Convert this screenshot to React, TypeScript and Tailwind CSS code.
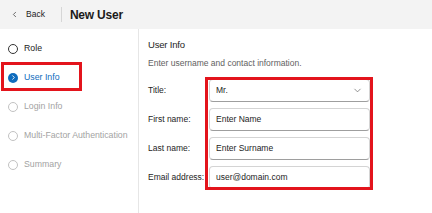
import { ChevronLeft, ChevronDown, ChevronRight } from "lucide-react"

type Step = {
  label: string
  state: "done" | "active" | "todo"
}

const steps: Step[] = [
  { label: "Role", state: "done" },
  { label: "User Info", state: "active" },
  { label: "Login Info", state: "todo" },
  { label: "Multi-Factor Authentication", state: "todo" },
  { label: "Summary", state: "todo" },
]

const StepItem = ({ step }: { step: Step }) => {
  return (
    <div className="relative flex h-[29px] items-center pl-[8px]">
      {step.state === "active" ? (
        <span className="flex h-[10px] w-[10px] items-center justify-center rounded-full bg-[#0f6cbd]">
          <ChevronRight className="h-[7px] w-[7px] text-white" strokeWidth={3} />
        </span>
      ) : (
        <span
          className={
            step.state === "done"
              ? "h-[10px] w-[10px] rounded-full border border-[#333333]"
              : "h-[10px] w-[10px] rounded-full border border-[#c2c2c2]"
          }
        />
      )}
      <span
        className={
          step.state === "active"
            ? "ml-[6px] text-[8.75px] text-[#0f6cbd]"
            : step.state === "done"
              ? "ml-[6px] text-[8.75px] text-[#242424]"
              : "ml-[6px] text-[8.75px] text-[#a3a3a3]"
        }
      >
        {step.label}
      </span>
      {step.state === "active" && (
        <div className="absolute left-[1px] top-[-1.5px] h-[29px] w-[81px] border-[3px] border-[#e3141c]" />
      )}
    </div>
  )
}

const Field = ({ value, select }: { value: string; select?: boolean }) => {
  return (
    <div className="flex h-[23px] items-center justify-between rounded-[4px] border border-[#d4d4d4] border-b-[#9e9e9e] pl-[6px] pr-[6px] text-[8.5px] text-[#242424]">
      <span>{value}</span>
      {select && (
        <ChevronDown className="h-[11px] w-[11px] text-[#616161]" strokeWidth={1.5} />
      )}
    </div>
  )
}

export default function App() {
  const labels = ["Title:", "First name:", "Last name:", "Email address:"]

  return (
    <div
      className="flex h-[213px] w-[432px] flex-col overflow-hidden bg-white text-[#242424]"
      style={{ fontFamily: '"Liberation Sans", Arial, sans-serif' }}
    >
      {/* header */}
      <div className="flex h-[29px] shrink-0 items-center bg-[#f3f3f3]">
        <div className="flex items-center pl-[10px]">
          <ChevronLeft className="h-[9px] w-[9px] text-[#424242]" strokeWidth={2} />
          <span className="ml-[7px] text-[8.5px] text-[#242424]">Back</span>
        </div>
        <div className="ml-[16px] h-[15px] w-px bg-[#d6d6d6]" />
        <h1 className="ml-[8px] text-[12px] font-bold tracking-[-0.2px] text-[#1a1a1a]">
          New User
        </h1>
      </div>

      <div className="flex flex-1">
        {/* steps */}
        <div className="w-[139px] shrink-0 border-r border-[#e6e6e6] pt-[5px]">
          {steps.map((s) => (
            <StepItem key={s.label} step={s} />
          ))}
        </div>

        {/* form */}
        <div className="flex flex-1 flex-col pl-[9px] pt-[10px]">
          <h2 className="text-[9.5px] font-medium leading-[12px] tracking-[-0.2px] text-[#242424]">
            User Info
          </h2>
          <p className="mt-[6px] text-[8.5px] leading-[12px] text-[#616161]">
            Enter username and contact information.
          </p>

          <div className="mt-[10px] flex">
            <div className="flex w-[61px] flex-col gap-[6px]">
              {labels.map((l) => (
                <div key={l} className="flex h-[23px] items-center text-[8.5px] text-[#242424]">
                  {l}
                </div>
              ))}
            </div>
            <div className="relative flex w-[161px] flex-col gap-[6px]">
              <Field value="Mr." select />
              <Field value="Enter Name" />
              <Field value="Enter Surname" />
              <Field value="user@domain.com" />
              <div className="absolute -bottom-[1px] -left-[4px] -right-[3px] -top-[2px] border-[3px] border-[#e3141c]" />
            </div>
          </div>
        </div>
      </div>
    </div>
  )
}
